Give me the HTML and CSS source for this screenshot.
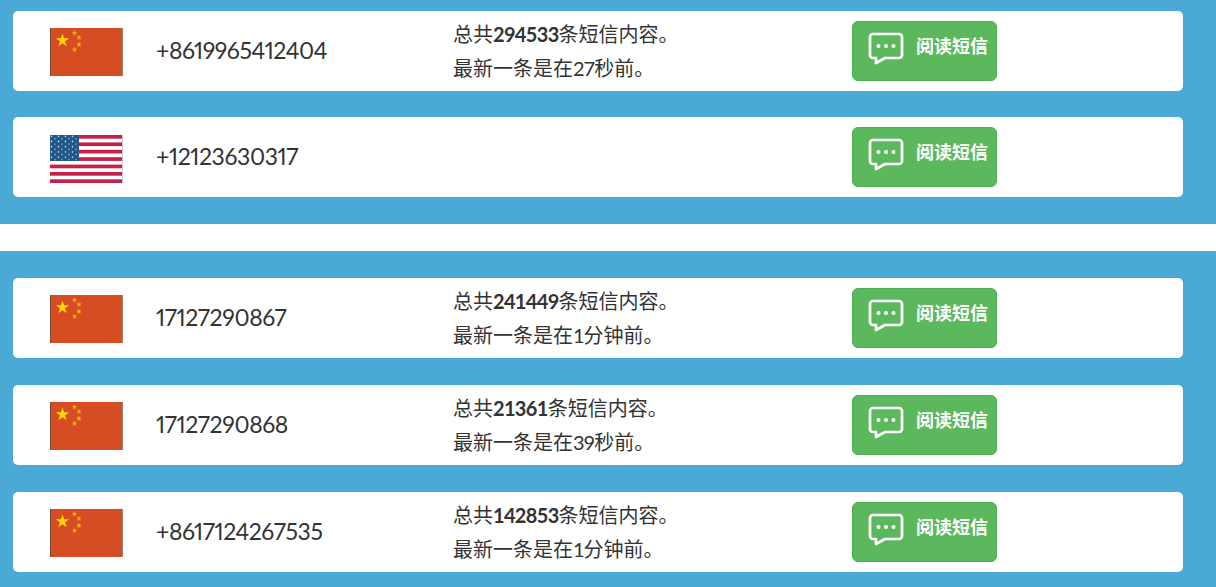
FILE: index.html
```html
<!DOCTYPE html>
<html lang="zh-CN">
<head>
    <meta charset="UTF-8">
    <title>短信列表</title>
    <link rel="stylesheet" href="styles.css">
</head>
<body>
    <!-- Shared flags and icon -->
    <svg class="defs" xmlns="http://www.w3.org/2000/svg">
        <defs>
            <polygon id="star" points="0,-1 0.225,-0.309 0.951,-0.309 0.363,0.118 0.588,0.809 0,0.382 -0.588,0.809 -0.363,0.118 -0.951,-0.309 -0.225,-0.309"/>
            <pattern id="stars" width="7" height="5.2" patternUnits="userSpaceOnUse">
                <circle cx="1.5" cy="1.3" r="0.8" fill="#d5e2ee"/>
                <circle cx="5" cy="3.9" r="0.8" fill="#8fb0cd"/>
            </pattern>
            <symbol id="flag-cn" viewBox="0 0 73 48">
                <rect width="73" height="48" fill="#d74d23"/>
                <rect width="1" height="48" fill="#7b4a35"/>
                <rect x="72" width="1" height="48" fill="#a3806f"/>
                <use href="#star" transform="translate(12.5 12.5) scale(7)" fill="#fdd800"/>
                <use href="#star" transform="translate(24.5 5) scale(3)" fill="#f0b010"/>
                <use href="#star" transform="translate(29 9.5) scale(3)" fill="#f0b010"/>
                <use href="#star" transform="translate(29 16.5) scale(3)" fill="#f5c010"/>
                <use href="#star" transform="translate(24.5 21.5) scale(3)" fill="#f0b010"/>
            </symbol>
            <symbol id="flag-us" viewBox="0 0 73 48">
                <rect width="73" height="48" fill="#fff"/>
                <g fill="#c5224a">
                    <rect width="73" height="3.7"/>
                    <rect y="7.4" width="73" height="3.7"/>
                    <rect y="14.8" width="73" height="3.7"/>
                    <rect y="22.2" width="73" height="3.7"/>
                    <rect y="29.6" width="73" height="3.7"/>
                    <rect y="37" width="73" height="3.7"/>
                    <rect y="44.3" width="73" height="3.7"/>
                </g>
                <rect width="29" height="26" fill="#1f5487"/>
                <rect width="29" height="26" fill="url(#stars)"/>
                <rect x="72" width="1" height="48" fill="#c9c9d2"/>
            </symbol>
            <symbol id="icon-msg" viewBox="0 0 36 33">
                <path d="M5 2H31a3 3 0 0 1 3 3V23a3 3 0 0 1-3 3H17L8 31V26H5a3 3 0 0 1-3-3V5a3 3 0 0 1 3-3z" fill="none" stroke="#fff" stroke-width="2.7" stroke-linejoin="round"/>
                <circle cx="10.5" cy="14" r="2" fill="#fff"/>
                <circle cx="18" cy="14" r="2" fill="#fff"/>
                <circle cx="25.5" cy="14" r="2" fill="#fff"/>
            </symbol>
        </defs>
    </svg>

    <section class="panel panel-first">
        <div class="row">
            <svg class="flag"><use href="#flag-cn"/></svg>
            <div class="phone">+8619965412404</div>
            <div class="info">
                <div>总共<b>294533</b>条短信内容。</div>
                <div>最新一条是在<span class="num">27</span>秒前。</div>
            </div>
            <a class="read-btn" href="#"><svg class="msg-icon"><use href="#icon-msg"/></svg><span>阅读短信</span></a>
        </div>
        <div class="row">
            <svg class="flag flag-us"><use href="#flag-us"/></svg>
            <div class="phone">+12123630317</div>
            <div class="info"></div>
            <a class="read-btn" href="#"><svg class="msg-icon"><use href="#icon-msg"/></svg><span>阅读短信</span></a>
        </div>
    </section>

    <section class="panel">
        <div class="row">
            <svg class="flag"><use href="#flag-cn"/></svg>
            <div class="phone">17127290867</div>
            <div class="info">
                <div>总共<b>241449</b>条短信内容。</div>
                <div>最新一条是在<span class="num">1</span>分钟前。</div>
            </div>
            <a class="read-btn" href="#"><svg class="msg-icon"><use href="#icon-msg"/></svg><span>阅读短信</span></a>
        </div>
        <div class="row">
            <svg class="flag"><use href="#flag-cn"/></svg>
            <div class="phone">17127290868</div>
            <div class="info">
                <div>总共<b>21361</b>条短信内容。</div>
                <div>最新一条是在<span class="num">39</span>秒前。</div>
            </div>
            <a class="read-btn" href="#"><svg class="msg-icon"><use href="#icon-msg"/></svg><span>阅读短信</span></a>
        </div>
        <div class="row">
            <svg class="flag"><use href="#flag-cn"/></svg>
            <div class="phone">+8617124267535</div>
            <div class="info">
                <div>总共<b>142853</b>条短信内容。</div>
                <div>最新一条是在<span class="num">1</span>分钟前。</div>
            </div>
            <a class="read-btn" href="#"><svg class="msg-icon"><use href="#icon-msg"/></svg><span>阅读短信</span></a>
        </div>
    </section>
</body>
</html>
```
FILE: styles.css
```css
html, body {
    margin: 0;
    padding: 0;
    height: 587px;
    overflow: hidden;
}

body {
    font-family: Lato, "Noto Sans CJK SC", sans-serif;
    color: #333;
    background: #fff;
}

.defs {
    display: block;
    width: 0;
    height: 0;
}

.panel {
    background: #4aa9d5;
    padding: 27px 33px 15px 13px;
    margin-bottom: 27px;
}

.panel-first {
    padding-top: 11px;
    padding-bottom: 27px;
}

.row {
    display: grid;
    grid-template-columns: 106px 297px 399px 145px;
    align-items: center;
    height: 80px;
    padding-left: 37px;
    margin-bottom: 27px;
    background: #fff;
    border-radius: 5px;
    box-sizing: border-box;
}

.panel-first .row {
    margin-bottom: 26px;
}

.row:last-child {
    margin-bottom: 0;
}

.flag {
    display: block;
    width: 73px;
    height: 48px;
    margin-top: 2px;
}

.flag-us {
    margin-top: 4px;
}

.phone {
    padding-bottom: 2px;
    font-size: 23px;
    letter-spacing: -0.4px;
    font-feature-settings: "pnum";
}

.info {
    font-size: 20px;
    line-height: 34px;
}

.info b {
    font-weight: 700;
    letter-spacing: -0.67px;
}

.num {
    letter-spacing: -1px;
}

.read-btn {
    display: flex;
    gap: 12px;
    box-sizing: border-box;
    height: 60px;
    padding: 10px 0 0 15px;
    background: #5cb85c;
    border: 1px solid #4cae4c;
    border-radius: 6px;
    color: #fff;
    font-size: 18px;
    font-weight: 700;
    line-height: 28px;
    text-decoration: none;
    white-space: nowrap;
}

.msg-icon {
    width: 36px;
    height: 33px;
    flex: none;
}
```
